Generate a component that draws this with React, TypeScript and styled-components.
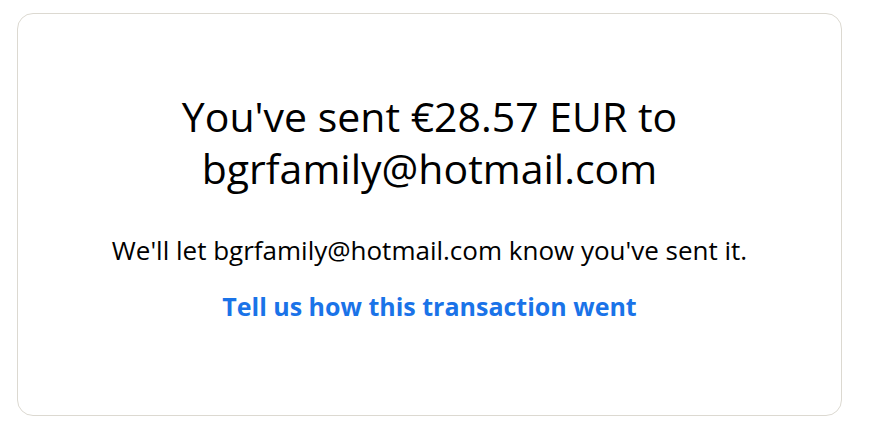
import React from "react";
import styled, { createGlobalStyle } from "styled-components";

const GlobalStyle = createGlobalStyle`
  html, body {
    margin: 0;
    padding: 0;
    background: #ffffff;
  }
  body {
    font-family: "Open Sans", Lato, "Liberation Sans", sans-serif;
    color: #000000;
  }
`;

const Page = styled.div`
  padding: 13px 0 0 17px;
`;

const Card = styled.section`
  box-sizing: border-box;
  width: 825px;
  height: 403px;
  border: 1px solid #dcd9d1;
  border-radius: 16px;
  display: flex;
  flex-direction: column;
  align-items: center;
  padding: 76px 10px 0;
  text-align: center;
`;

const Title = styled.h1`
  margin: 0;
  font-size: 41px;
  line-height: 52px;
  font-weight: 400;
  color: #000000;
`;

const Note = styled.p`
  margin: 40px 0 0;
  font-size: 26px;
  line-height: 32px;
  color: #000000;
`;

const FeedbackLink = styled.a`
  margin-top: 24px;
  font-size: 25px;
  line-height: 32px;
  font-weight: 700;
  color: #1a73e8;
  text-decoration: none;
  cursor: pointer;
`;

export default function App() {
  const recipient = "bgrfamily@hotmail.com";
  return (
    <>
      <GlobalStyle />
      <Page>
        <Card>
          <Title>
            You've sent €28.57 EUR to
            <br />
            {recipient}
          </Title>
          <Note>We'll let {recipient} know you've sent it.</Note>
          <FeedbackLink href="#">Tell us how this transaction went</FeedbackLink>
        </Card>
      </Page>
    </>
  );
}
